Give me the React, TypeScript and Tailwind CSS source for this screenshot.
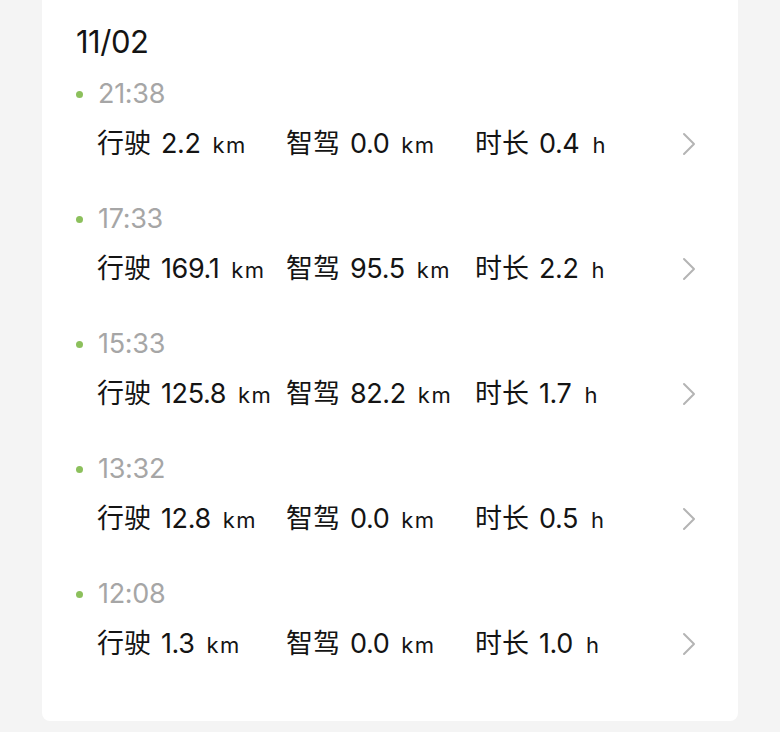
const trips = [
  { time: "21:38", drive: "2.2", smart: "0.0", hours: "0.4" },
  { time: "17:33", drive: "169.1", smart: "95.5", hours: "2.2" },
  { time: "15:33", drive: "125.8", smart: "82.2", hours: "1.7" },
  { time: "13:32", drive: "12.8", smart: "0.0", hours: "0.5" },
  { time: "12:08", drive: "1.3", smart: "0.0", hours: "1.0" },
];

const font = "font-['Inter','Noto_Sans_CJK_SC',sans-serif]";

function Stat({ label, value, unit }: { label: string; value: string; unit: string }) {
  return (
    <div className="w-[189px] shrink-0 whitespace-nowrap">
      <span className="text-[27px]">{label}</span>
      <span className="ml-[10px] text-[27px] tracking-[-0.4px]">{value}</span>
      <span className="ml-[12px] text-[22px] tracking-[1.5px]">{unit}</span>
    </div>
  );
}

function Chevron() {
  return (
    <svg width="16" height="24" viewBox="0 0 16 24" fill="none">
      <path d="M3 2 L13 12 L3 22" stroke="#b4b4b4" strokeWidth="2" strokeLinecap="round" strokeLinejoin="round" />
    </svg>
  );
}

export default function App() {
  return (
    <div className={`h-[732px] w-[780px] overflow-hidden bg-[#f4f4f4] ${font} text-[#141414]`}>
      <div className="mx-[42px] h-[721px] rounded-b-[8px] bg-white pl-[34px] pr-[41px]">
        <div className="pt-[23px] text-[31px] leading-[38px] tracking-[-0.5px]">11/02</div>
        <div className="mt-[14px]">
          {trips.map((trip) => (
            <div key={trip.time} className="h-[125px]">
              <div className="flex h-[38px] items-center">
                <span className="mr-[15px] size-[7px] rounded-full bg-[#8cc05c]" />
                <span className="text-[27px] tracking-[-0.3px] text-[#a6a6a6]">{trip.time}</span>
              </div>
              <div className="mt-[11px] flex h-[40px] items-center pl-[21px]">
                <Stat label="行驶" value={trip.drive} unit="km" />
                <Stat label="智驾" value={trip.smart} unit="km" />
                <div className="flex-1 whitespace-nowrap">
                  <span className="text-[27px]">时长</span>
                  <span className="ml-[10px] text-[27px] tracking-[-0.4px]">{trip.hours}</span>
                  <span className="ml-[13px] text-[22px]">h</span>
                </div>
                <Chevron />
              </div>
            </div>
          ))}
        </div>
      </div>
    </div>
  );
}
